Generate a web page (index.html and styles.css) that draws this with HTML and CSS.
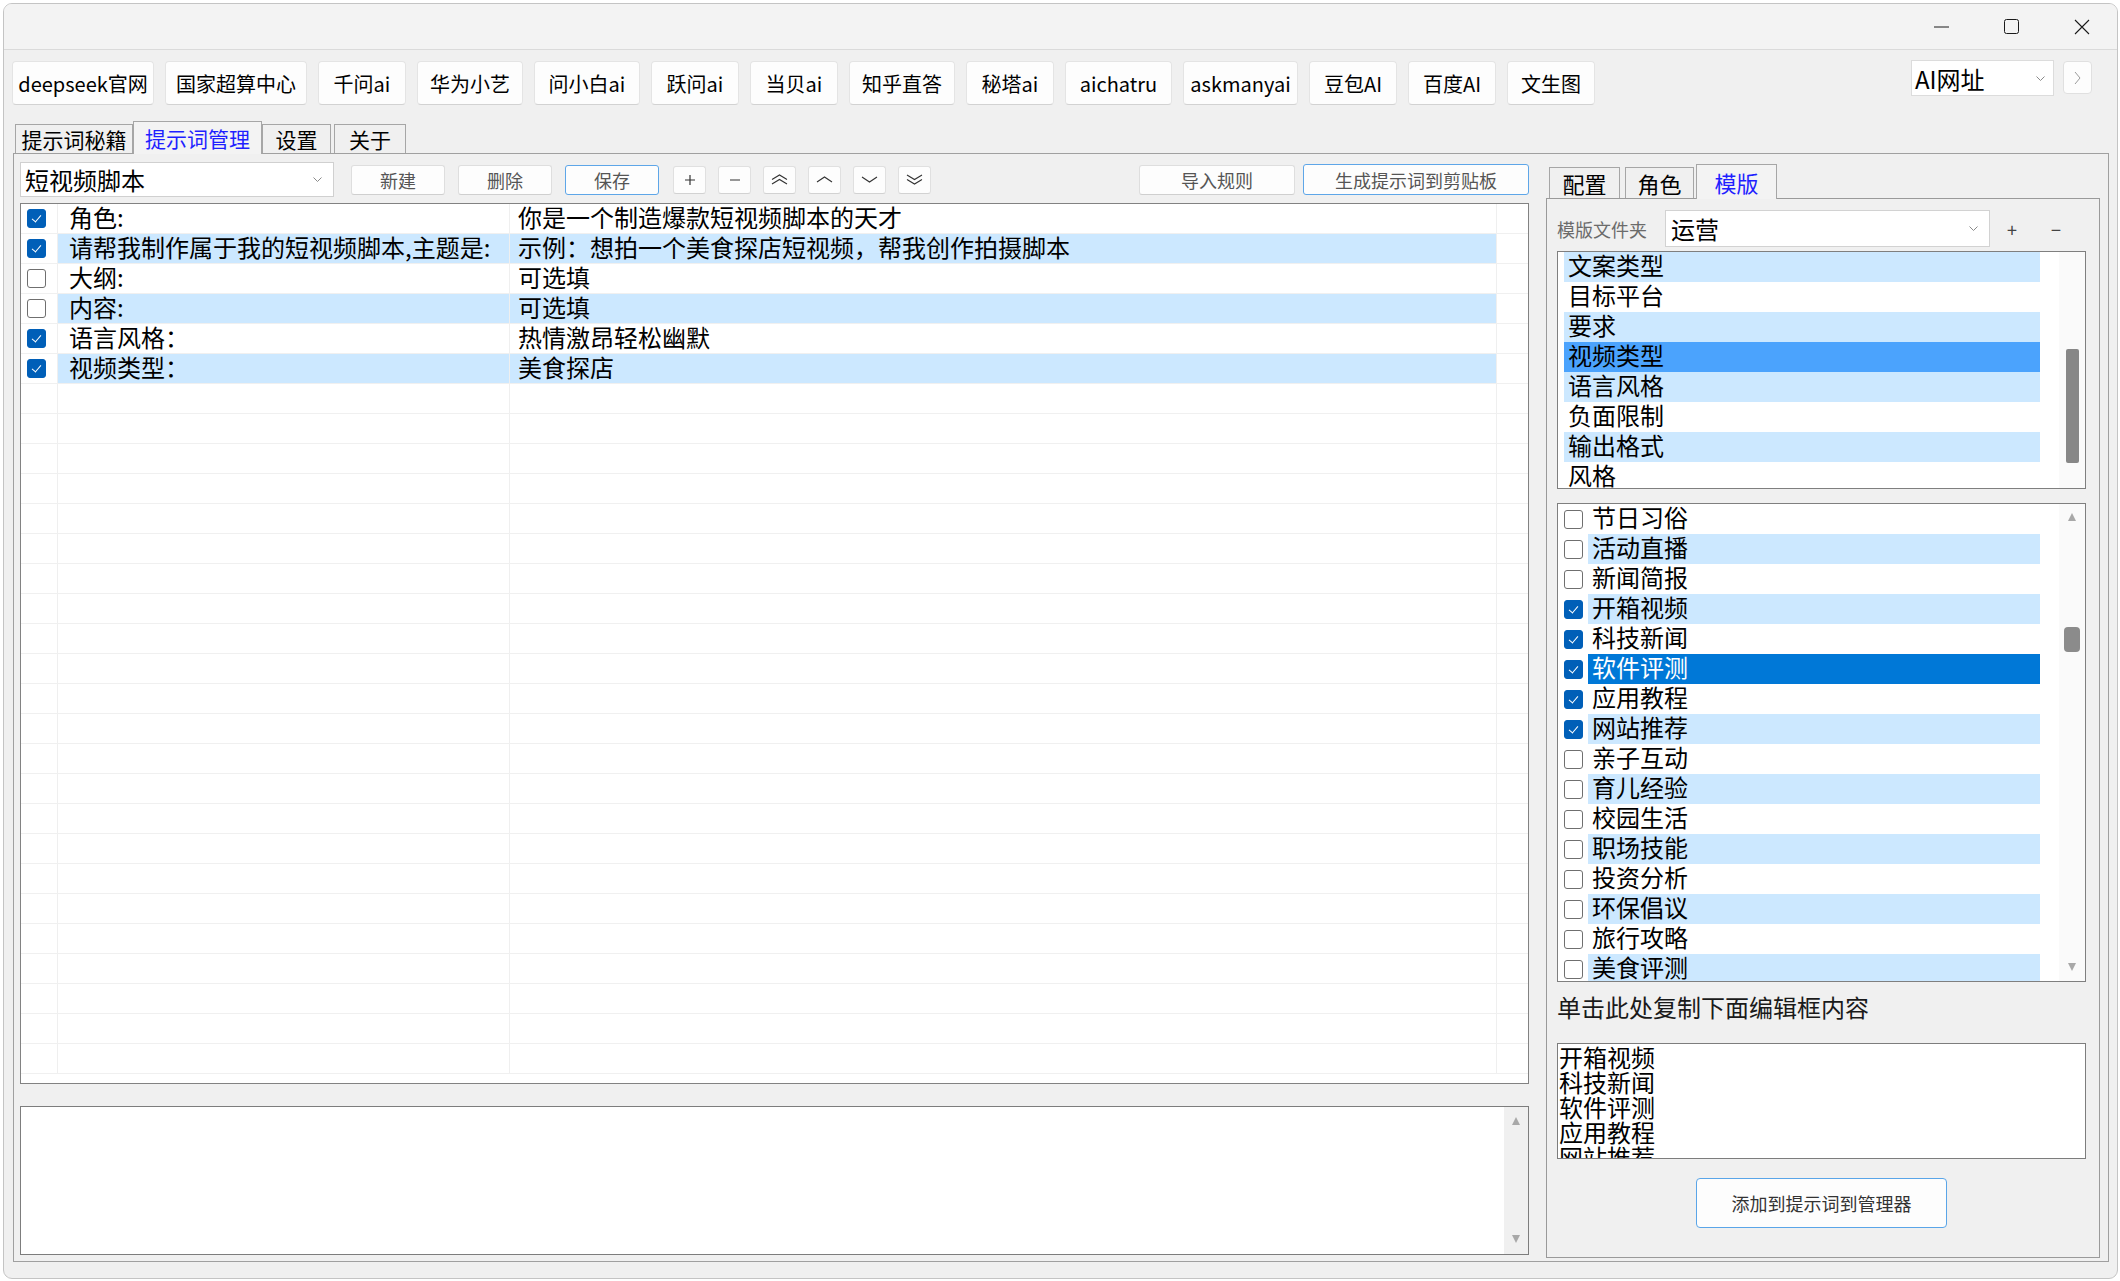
FILE: index.html
```html
<!DOCTYPE html>
<html lang="zh-CN">
<head>
    <meta charset="UTF-8">
    <meta name="viewport" content="width=device-width, initial-scale=1.0">
    <title>提示词管理</title>
    <link rel="stylesheet" href="styles.css">
</head>
<body>
<div class="window">
    <div class="titlebar">
        <div class="win-btn"><svg width="16" height="2"><path d="M0 1h15" stroke="#1a1a1a" stroke-width="1"/></svg></div>
        <div class="win-btn"><svg width="16" height="16"><rect x="0.5" y="0.5" width="14" height="14" rx="2" fill="none" stroke="#1a1a1a"/></svg></div>
        <div class="win-btn"><svg width="16" height="16"><path d="M1 1l14 14M15 1L1 15" stroke="#1a1a1a" stroke-width="1.1"/></svg></div>
    </div>

    <div class="linkbar">
        <div class="links">
            <button class="link w142">deepseek官网</button>
            <button class="link w142">国家超算中心</button>
            <button class="link w88">千问ai</button>
            <button class="link w106">华为小艺</button>
            <button class="link w106">问小白ai</button>
            <button class="link w88">跃问ai</button>
            <button class="link w88">当贝ai</button>
            <button class="link w106">知乎直答</button>
            <button class="link w88">秘塔ai</button>
            <button class="link w107">aichatru</button>
            <button class="link w115">askmanyai</button>
            <button class="link w88">豆包AI</button>
            <button class="link w88">百度AI</button>
            <button class="link w88">文生图</button>
        </div>
        <div class="url-combo">
            <span>AI网址</span>
            <svg width="9" height="5"><path d="M0.5 0.5l4 4 4-4" fill="none" stroke="#8a8a8a"/></svg>
        </div>
        <button class="next-btn"><svg width="7" height="14"><path d="M1 1l5 6-5 6" fill="none" stroke="#9a9a9a"/></svg></button>
    </div>

    <div class="main-tabs">
        <div class="tab t1">提示词秘籍</div>
        <div class="tab t2 active">提示词管理</div>
        <div class="tab t3">设置</div>
        <div class="tab t4">关于</div>
    </div>

    <div class="page">
        <div class="left">
            <div class="toolbar">
                <div class="combo">
                    <span>短视频脚本</span>
                    <svg width="9" height="5"><path d="M0.5 0.5l4 4 4-4" fill="none" stroke="#8a8a8a"/></svg>
                </div>
                <button class="tbtn first">新建</button>
                <button class="tbtn">删除</button>
                <button class="tbtn focus">保存</button>
                <button class="ibtn first"><svg width="10" height="10"><path d="M5 0v10M0 5h10" stroke="#333" stroke-width="1.2"/></svg></button>
                <button class="ibtn"><svg width="10" height="10"><path d="M0 5h10" stroke="#333" stroke-width="1.2"/></svg></button>
                <button class="ibtn"><svg width="17" height="11"><path d="M1 5.5l7.5-4.5 7.5 4.5M1 10l7.5-4.5 7.5 4.5" fill="none" stroke="#333" stroke-width="1.1"/></svg></button>
                <button class="ibtn"><svg width="17" height="7"><path d="M1 6l7.5-5 7.5 5" fill="none" stroke="#333" stroke-width="1.1"/></svg></button>
                <button class="ibtn"><svg width="17" height="7"><path d="M1 1l7.5 5 7.5-5" fill="none" stroke="#333" stroke-width="1.1"/></svg></button>
                <button class="ibtn"><svg width="17" height="11"><path d="M1 1l7.5 4.5 7.5-4.5M1 5.5l7.5 4.5 7.5-4.5" fill="none" stroke="#333" stroke-width="1.1"/></svg></button>
                <button class="tbtn import">导入规则</button>
                <button class="tbtn focus gen">生成提示词到剪贴板</button>
            </div>

            <div class="grid">
                <div class="row"><div class="c-chk"><span class="cb on"></span></div><div class="c-key">角色:</div><div class="c-val">你是一个制造爆款短视频脚本的天才</div><div class="c-end"></div></div>
                <div class="row alt"><div class="c-chk"><span class="cb on"></span></div><div class="c-key">请帮我制作属于我的短视频脚本,主题是:</div><div class="c-val">示例：想拍一个美食探店短视频，帮我创作拍摄脚本</div><div class="c-end"></div></div>
                <div class="row"><div class="c-chk"><span class="cb"></span></div><div class="c-key">大纲:</div><div class="c-val">可选填</div><div class="c-end"></div></div>
                <div class="row alt"><div class="c-chk"><span class="cb"></span></div><div class="c-key">内容:</div><div class="c-val">可选填</div><div class="c-end"></div></div>
                <div class="row"><div class="c-chk"><span class="cb on"></span></div><div class="c-key">语言风格：</div><div class="c-val">热情激昂轻松幽默</div><div class="c-end"></div></div>
                <div class="row alt"><div class="c-chk"><span class="cb on"></span></div><div class="c-key">视频类型：</div><div class="c-val">美食探店</div><div class="c-end"></div></div>
                <div class="row"><div class="c-chk"></div><div class="c-key"></div><div class="c-val"></div><div class="c-end"></div></div>
                <div class="row"><div class="c-chk"></div><div class="c-key"></div><div class="c-val"></div><div class="c-end"></div></div>
                <div class="row"><div class="c-chk"></div><div class="c-key"></div><div class="c-val"></div><div class="c-end"></div></div>
                <div class="row"><div class="c-chk"></div><div class="c-key"></div><div class="c-val"></div><div class="c-end"></div></div>
                <div class="row"><div class="c-chk"></div><div class="c-key"></div><div class="c-val"></div><div class="c-end"></div></div>
                <div class="row"><div class="c-chk"></div><div class="c-key"></div><div class="c-val"></div><div class="c-end"></div></div>
                <div class="row"><div class="c-chk"></div><div class="c-key"></div><div class="c-val"></div><div class="c-end"></div></div>
                <div class="row"><div class="c-chk"></div><div class="c-key"></div><div class="c-val"></div><div class="c-end"></div></div>
                <div class="row"><div class="c-chk"></div><div class="c-key"></div><div class="c-val"></div><div class="c-end"></div></div>
                <div class="row"><div class="c-chk"></div><div class="c-key"></div><div class="c-val"></div><div class="c-end"></div></div>
                <div class="row"><div class="c-chk"></div><div class="c-key"></div><div class="c-val"></div><div class="c-end"></div></div>
                <div class="row"><div class="c-chk"></div><div class="c-key"></div><div class="c-val"></div><div class="c-end"></div></div>
                <div class="row"><div class="c-chk"></div><div class="c-key"></div><div class="c-val"></div><div class="c-end"></div></div>
                <div class="row"><div class="c-chk"></div><div class="c-key"></div><div class="c-val"></div><div class="c-end"></div></div>
                <div class="row"><div class="c-chk"></div><div class="c-key"></div><div class="c-val"></div><div class="c-end"></div></div>
                <div class="row"><div class="c-chk"></div><div class="c-key"></div><div class="c-val"></div><div class="c-end"></div></div>
                <div class="row"><div class="c-chk"></div><div class="c-key"></div><div class="c-val"></div><div class="c-end"></div></div>
                <div class="row"><div class="c-chk"></div><div class="c-key"></div><div class="c-val"></div><div class="c-end"></div></div>
                <div class="row"><div class="c-chk"></div><div class="c-key"></div><div class="c-val"></div><div class="c-end"></div></div>
                <div class="row"><div class="c-chk"></div><div class="c-key"></div><div class="c-val"></div><div class="c-end"></div></div>
                <div class="row"><div class="c-chk"></div><div class="c-key"></div><div class="c-val"></div><div class="c-end"></div></div>
                <div class="row"><div class="c-chk"></div><div class="c-key"></div><div class="c-val"></div><div class="c-end"></div></div>
                <div class="row"><div class="c-chk"></div><div class="c-key"></div><div class="c-val"></div><div class="c-end"></div></div>
            </div>

            <div class="memo">
                <div class="memo-text"></div>
                <div class="memo-bar">
                    <span class="arr up"></span>
                    <span class="arr down"></span>
                </div>
            </div>
        </div>

        <div class="right">
            <div class="subtabs">
                <div class="stab s1">配置</div>
                <div class="stab s2">角色</div>
                <div class="stab s3 active">模版</div>
            </div>
            <div class="subpage">
                <div class="folder-row">
                    <div class="folder-label">模版文件夹</div>
                    <div class="folder-combo">
                        <span>运营</span>
                        <svg width="9" height="5"><path d="M0.5 0.5l4 4 4-4" fill="none" stroke="#8a8a8a"/></svg>
                    </div>
                    <div class="mini">+</div>
                    <div class="mini">−</div>
                </div>

                <div class="list list1">
                    <div class="items">
                        <div class="item alt">文案类型</div>
                        <div class="item">目标平台</div>
                        <div class="item alt">要求</div>
                        <div class="item sel">视频类型</div>
                        <div class="item alt">语言风格</div>
                        <div class="item">负面限制</div>
                        <div class="item alt">输出格式</div>
                        <div class="item">风格</div>
                    </div>
                    <div class="vbar">
                        <div class="thumb1"></div>
                    </div>
                </div>

                <div class="list list2">
                    <div class="items">
                        <div class="citem"><span class="cb"></span><span class="clabel">节日习俗</span></div>
                        <div class="citem alt"><span class="cb"></span><span class="clabel">活动直播</span></div>
                        <div class="citem"><span class="cb"></span><span class="clabel">新闻简报</span></div>
                        <div class="citem alt"><span class="cb on"></span><span class="clabel">开箱视频</span></div>
                        <div class="citem"><span class="cb on"></span><span class="clabel">科技新闻</span></div>
                        <div class="citem sel"><span class="cb on"></span><span class="clabel">软件评测</span></div>
                        <div class="citem"><span class="cb on"></span><span class="clabel">应用教程</span></div>
                        <div class="citem alt"><span class="cb on"></span><span class="clabel">网站推荐</span></div>
                        <div class="citem"><span class="cb"></span><span class="clabel">亲子互动</span></div>
                        <div class="citem alt"><span class="cb"></span><span class="clabel">育儿经验</span></div>
                        <div class="citem"><span class="cb"></span><span class="clabel">校园生活</span></div>
                        <div class="citem alt"><span class="cb"></span><span class="clabel">职场技能</span></div>
                        <div class="citem"><span class="cb"></span><span class="clabel">投资分析</span></div>
                        <div class="citem alt"><span class="cb"></span><span class="clabel">环保倡议</span></div>
                        <div class="citem"><span class="cb"></span><span class="clabel">旅行攻略</span></div>
                        <div class="citem alt"><span class="cb"></span><span class="clabel">美食评测</span></div>
                    </div>
                    <div class="vbar vbar2">
                        <span class="arr up"></span>
                        <div class="thumb2"></div>
                        <span class="arr down"></span>
                    </div>
                </div>

                <div class="copy-label">单击此处复制下面编辑框内容</div>
                <div class="copy-box">开箱视频<br>科技新闻<br>软件评测<br>应用教程<br>网站推荐</div>
                <button class="add-btn">添加到提示词到管理器</button>
            </div>
        </div>
    </div>
</div>
</body>
</html>
```

FILE: styles.css
```css
* {
    box-sizing: border-box;
}

body {
    margin: 0;
    background-color: #fff;
    font-family: "Noto Sans CJK SC", "Noto Sans", sans-serif;
    color: #000;
}

button {
    font-family: inherit;
    padding: 0;
    cursor: pointer;
}

.window {
    margin: 3px 0 0 3px;
    width: 2115px;
    height: 1276px;
    border: 1px solid #c4c4c4;
    border-radius: 9px;
    background-color: #f0f0f0;
    overflow: hidden;
    display: flex;
    flex-direction: column;
}

/* title bar */
.titlebar {
    flex: none;
    height: 46px;
    background-color: #f3f3f3;
    border-bottom: 1px solid #dadada;
    display: flex;
    justify-content: flex-end;
}

.win-btn {
    width: 70px;
    height: 45px;
    display: flex;
    align-items: center;
    justify-content: center;
}

/* link buttons */
.linkbar {
    flex: none;
    height: 55px;
    padding: 11px 25px 0 8px;
    display: flex;
    align-items: flex-start;
}

.links {
    display: flex;
    gap: 11px;
}

.link {
    height: 44px;
    background-color: #fdfdfd;
    border: 1px solid #e4e4e4;
    border-bottom-color: #d2d2d2;
    border-radius: 4px;
    font-size: 20px;
    color: #000;
    display: flex;
    align-items: center;
    justify-content: center;
}

.w88 { width: 88px; }
.w106 { width: 106px; }
.w107 { width: 107px; }
.w115 { width: 115px; }
.w142 { width: 142px; }

.url-combo {
    margin-left: auto;
    margin-top: -1px;
    width: 143px;
    height: 36px;
    background-color: #fff;
    border: 1px solid #dcdcdc;
    padding: 0 8px 0 3px;
    font-size: 24px;
    display: flex;
    align-items: center;
    justify-content: space-between;
}

.next-btn {
    margin-left: 9px;
    width: 29px;
    height: 33px;
    background-color: #fdfdfd;
    border: 1px solid #e0e0e0;
    border-radius: 4px;
    display: flex;
    align-items: center;
    justify-content: center;
}

/* main tabs */
.main-tabs {
    flex: none;
    height: 32px;
    margin-top: 16px;
    padding-left: 11px;
    display: flex;
    align-items: flex-end;
}

.tab {
    height: 29px;
    border: 1px solid #a6a6a6;
    border-bottom: none;
    background-color: #f0f0f0;
    font-size: 21px;
    display: flex;
    align-items: center;
    justify-content: center;
}

.tab.active {
    position: relative;
    height: 33px;
    margin-bottom: -1px;
    background-color: #f3f3f3;
    color: #1f1fff;
}

.t1 { width: 118px; }
.t2 { width: 129px; }
.t3 { width: 69px; }
.t4 { width: 72px; margin-left: 3px; }

/* tab page */
.page {
    flex: none;
    height: 1109px;
    margin: 0 8px 0 9px;
    border: 1px solid #a0a0a0;
    padding: 0 8px 0 6px;
    display: flex;
    gap: 17px;
}

.left {
    width: 1509px;
    margin-top: 8px;
    display: flex;
    flex-direction: column;
}

.toolbar {
    height: 35px;
    display: flex;
    align-items: center;
}

.combo {
    width: 314px;
    height: 35px;
    background-color: #fff;
    border: 1px solid #d0d0d0;
    padding: 0 11px 0 4px;
    font-size: 24px;
    display: flex;
    align-items: center;
    justify-content: space-between;
}

.tbtn {
    width: 94px;
    height: 30px;
    margin-left: 13px;
    background-color: #fdfdfd;
    border: 1px solid #dedede;
    border-bottom-color: #cfcfcf;
    border-radius: 3px;
    font-size: 18px;
    color: #555;
}

.tbtn.first {
    margin-left: 17px;
}

.tbtn.focus {
    border-color: #5ea6e8;
}

.ibtn {
    width: 33px;
    height: 28px;
    margin-left: 12px;
    background-color: #fdfdfd;
    border: 1px solid #e0e0e0;
    border-bottom-color: #d2d2d2;
    border-radius: 3px;
    display: flex;
    align-items: center;
    justify-content: center;
}

.ibtn.first {
    margin-left: 14px;
}

.tbtn.import {
    width: 156px;
    margin-left: auto;
}

.tbtn.gen {
    width: 226px;
    height: 31px;
    margin-left: 8px;
}

/* grid */
.grid {
    height: 881px;
    margin-top: 6px;
    background-color: #fff;
    border: 1px solid #828282;
    overflow: hidden;
}

.row {
    height: 30px;
    display: flex;
    border-bottom: 1px solid #f0f0f0;
    font-size: 24px;
    line-height: 25px;
    white-space: nowrap;
}

.c-chk {
    width: 37px;
    padding-left: 6px;
    border-right: 1px solid #efefef;
    display: flex;
    align-items: center;
}

.c-key {
    width: 452px;
    padding-left: 11px;
    border-right: 1px solid #efefef;
}

.c-val {
    width: 987px;
    padding-left: 8px;
    border-right: 1px solid #efefef;
}

.c-end {
    flex: 1;
}

.row.alt .c-key,
.row.alt .c-val {
    background-color: #cce8ff;
}

/* checkboxes */
.cb {
    position: relative;
    flex: none;
    width: 19px;
    height: 19px;
    border: 1px solid #6f6f6f;
    border-radius: 3px;
    background-color: #fff;
}

.cb.on {
    border-color: #005fb8;
    background-color: #005fb8;
}

.cb.on::after {
    content: "";
    position: absolute;
    left: 6px;
    top: 3px;
    width: 4px;
    height: 8px;
    border: solid #fff;
    border-width: 0 1.4px 1.4px 0;
    transform: rotate(40deg);
}

/* memo */
.memo {
    height: 149px;
    margin-top: 22px;
    background-color: #fff;
    border: 1px solid #7d7d7d;
    display: flex;
}

.memo-text {
    flex: 1;
}

.memo-bar {
    width: 24px;
    background-color: #f0f0f0;
    padding: 10px 0 11px;
    display: flex;
    flex-direction: column;
    align-items: center;
    justify-content: space-between;
}

.arr {
    width: 0;
    height: 0;
    border-left: 4px solid transparent;
    border-right: 4px solid transparent;
}

.arr.up {
    border-bottom: 8px solid #a8a8a8;
}

.arr.down {
    border-top: 8px solid #a8a8a8;
}

/* right side */
.right {
    width: 554px;
    margin-top: 10px;
    display: flex;
    flex-direction: column;
}

.subtabs {
    height: 34px;
    padding-left: 3px;
    display: flex;
    align-items: flex-end;
}

.stab {
    height: 31px;
    border: 1px solid #a6a6a6;
    border-bottom: none;
    background-color: #f0f0f0;
    font-size: 22px;
    display: flex;
    align-items: center;
    justify-content: center;
}

.stab.active {
    position: relative;
    height: 35px;
    margin-bottom: -1px;
    background-color: #f3f3f3;
    color: #1f1fff;
}

.s1 { width: 71px; }
.s2 { width: 69px; margin-left: 5px; }
.s3 { width: 81px; margin-left: 2px; }

.subpage {
    height: 1060px;
    border: 1px solid #9a9a9a;
    padding: 11px 13px 0 10px;
    display: flex;
    flex-direction: column;
}

.folder-row {
    height: 37px;
    display: flex;
    align-items: center;
}

.folder-label {
    width: 108px;
    font-size: 18px;
    color: #6b6b6b;
}

.folder-combo {
    width: 325px;
    height: 37px;
    background-color: #fff;
    border: 1px solid #d2d2d2;
    padding: 0 11px 0 5px;
    font-size: 24px;
    display: flex;
    align-items: center;
    justify-content: space-between;
}

.mini {
    width: 44px;
    text-align: center;
    font-size: 18px;
    color: #444;
}

.list {
    background-color: #fff;
    border: 1px solid #7f7f7f;
    display: flex;
    overflow: hidden;
}

.list1 {
    height: 238px;
    margin-top: 4px;
}

.list2 {
    height: 479px;
    margin-top: 14px;
}

.items {
    flex: 1;
    padding: 0 19px 0 6px;
}

.item {
    height: 30px;
    line-height: 26px;
    padding-left: 4px;
    font-size: 24px;
}

.item.alt {
    background-color: #cce8ff;
}

.item.sel {
    background-color: #4ba3fd;
}

.citem {
    height: 30px;
    display: flex;
    align-items: center;
}

.citem .cb {
    margin-right: 5px;
}

.clabel {
    flex: 1;
    height: 30px;
    line-height: 26px;
    padding-left: 4px;
    font-size: 24px;
}

.citem.alt .clabel {
    background-color: #cce8ff;
}

.citem.sel .clabel {
    background-color: #0078d7;
    color: #fff;
}

.vbar {
    width: 26px;
    background-color: #fafafa;
    display: flex;
    flex-direction: column;
    align-items: center;
}

.thumb1 {
    width: 13px;
    height: 114px;
    margin-top: 97px;
    border-radius: 2px;
    background-color: #878787;
}

.vbar2 {
    padding: 9px 0 10px;
}

.thumb2 {
    width: 16px;
    height: 25px;
    margin-top: 106px;
    margin-bottom: auto;
    border-radius: 4px;
    background-color: #8b8b8b;
}

.copy-label {
    height: 40px;
    margin-top: 5px;
    line-height: 40px;
    font-size: 24px;
    color: #1a1a1a;
}

.copy-box {
    height: 116px;
    margin-top: 16px;
    background-color: #fff;
    border: 1px solid #7d7d7d;
    padding: 0 1px;
    font-size: 24px;
    line-height: 25px;
    overflow: hidden;
}

.add-btn {
    width: 251px;
    height: 50px;
    margin: 19px auto 0;
    background-color: #fdfdfd;
    border: 1px solid #5aa5e8;
    border-radius: 4px;
    font-size: 18px;
    color: #333;
}
```
